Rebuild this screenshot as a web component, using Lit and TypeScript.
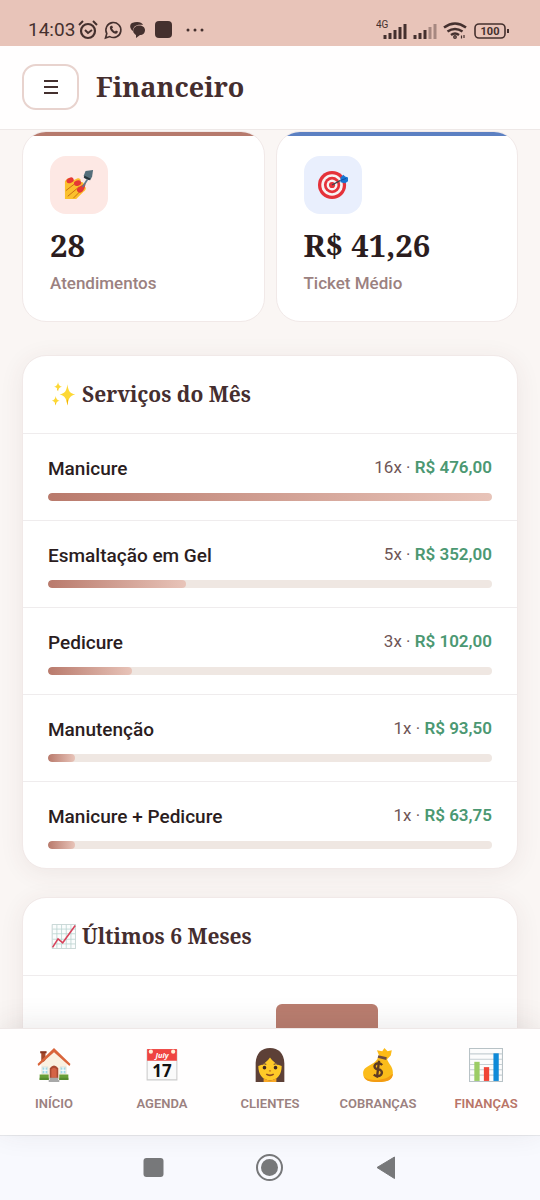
import { LitElement, html, css, svg } from "lit";
import { customElement, state } from "lit/decorators.js";

const emoji = {
  polish: svg`
    <path fill="#fbc02d" d="M1 12c3-5 8-4 9-1l4-2c3-1 5 2 3 4 3-1 5 1 4 4 3 1 3 4 0 6l-8 8H1z"/>
    <path d="M2 22l9-7M4 28l12-10M10 30l9-9" stroke="#c76a12" stroke-width="1"/>
    <ellipse cx="6.500" cy="11" rx="4" ry="2.800" transform="rotate(-22 6.500 11)" fill="#e53935"/>
    <ellipse cx="14.500" cy="14" rx="4" ry="2.900" transform="rotate(-18 14.500 14)" fill="#e53935"/>
    <path fill="#e53935" d="M14 20c2-3 5-3 9-7 0 5-2 10-5 11-3 1-5-2-4-4z"/>
    <path d="M20 18l5-8" stroke="#607d8b" stroke-width="2"/>
    <path d="M23 1l8-1-1 7-2 4-6-2-1-3z" fill="#546e7a"/>
    <path d="M22 6l6 3-1 2-6-3z" fill="#263238"/>`,
  target: svg`
    <circle cx="15" cy="16" r="15" fill="#e5323a"/>
    <circle cx="15" cy="16" r="11.500" fill="#f7f3f3"/>
    <circle cx="15" cy="16" r="8.700" fill="#e5323a"/>
    <circle cx="15" cy="16" r="5.800" fill="#f7f3f3"/>
    <circle cx="15" cy="16" r="3.300" fill="#e5323a"/>
    <path d="M15 16l9-5" stroke="#37474f" stroke-width="1.500"/>
    <path d="M24 8l3-3 2 2 3 1v4l-3 2-5-1z" fill="#1976d2"/>
    <path d="M24 11l6-2" stroke="#0d47a1"/>`,
  sparkles: svg`
    <path fill="#fdd835" d="M21 3c1 8 3 12 10 13-7 1-9 6-10 14-1-8-3-13-10-14 7-1 9-5 10-13zM9 0c.6 4 2 5.500 5 6-3 .5-4.400 2-5 6-.6-4-2-5.500-5-6 3-.5 4.400-2 5-6zM6 18c.6 4 2 5.500 5 6-3 .5-4.400 2-5 6-.6-4-2-5.500-5-6 3-.5 4.400-2 5-6z"/>
    <path fill="#f4b400" d="M21 22l1 2-1 6-1-6zM9 9v3l-1-3zM6 27v3l-1-3z"/>`,
  trend: svg`
    <path fill="#fbfdfd" stroke="#b7c9c8" d="M1.500.5h30v31h-30z"/>
    <path d="M7.500 1v30M13.500 1v30M19.500 1v30M25.500 1v30M2 6.500h29M2 12.500h29M2 19.500h29M2 25.500h29" stroke="#b9d2cf"/>
    <path d="M2 30l7-11 6 5L31 2" fill="none" stroke="#d8435b" stroke-width="2"/>`,
  house: svg`
    <path fill="#a6492b" d="M4 4h4v9H4z"/>
    <path fill="#8b351f" d="M3 3h6v2H3z"/>
    <path fill="#faf1e2" d="M4 15L16 4l12 11v13H4z"/>
    <path fill="#d9653b" d="M16 0l15.500 15-1 2L16 4 1.500 17l-1-2z"/>
    <path fill="#9fd9e8" stroke="#d5e2df" d="M5 18h5v6H5zM22 18h5v6h-5z"/>
    <path d="M7.500 18v6M5 21h5M24.500 18v6M22 21h5" stroke="#fff"/>
    <path fill="#a84a32" d="M12 29V19q4-5 8 0v10z"/>
    <path fill="#d46447" d="M13.500 28v-8q2.500-3 5 0v8z"/>
    <path fill="#689f38" d="M2.500 25H11v5H2.500zM21 25h8.500v5H21z"/>
    <path fill="#558b2f" d="M2.500 28H11v2H2.500zM21 28h8.500v2H21z"/>
    <path fill="#a8a8a8" d="M12 28h8v2h1v2H11v-2h1z"/>`,
  calendar: svg`
    <path fill="#fafafa" stroke="#ccc" d="M2 2h28v28H2z"/>
    <path fill="#ef4440" d="M2 1h28v11H2z"/>
    <circle cx="5.500" cy="3.500" r="2" fill="#fff0d5"/><circle cx="26.500" cy="3.500" r="2" fill="#fff0d5"/>
    <text x="16" y="9.500" class="month">July</text>
    <text x="16" y="27" class="day">17</text>`,
  woman: svg`
    <path fill="#5d4037" d="M2.500 32V14C3 5 8 0 16 0s13 5 13.500 14v18z"/>
    <path fill="#ffca28" d="M5 17q7-2 11-8 4 6 11 8c0 8-4 13.500-11 13.500S5 25 5 17z"/>
    <path fill="#f9a825" d="M10 28.500q6 4 12 0V32H10z"/>
    <circle cx="10.800" cy="18.500" r="1.700" fill="#3e2723"/><circle cx="21.200" cy="18.500" r="1.700" fill="#3e2723"/>
    <path d="M8.500 15.500q2-1.500 4 0M19.500 15.500q2-1.500 4 0" fill="none" stroke="#6d4c41"/>
    <path d="M15 21.500h2" stroke="#d48a1f" stroke-width="1.500"/>
    <path d="M12.500 24.500q3.500 2.500 7 0" fill="none" stroke="#8d4a1f" stroke-width="1.500"/>`,
  money: svg`
    <path fill="#fdbb17" d="M17 7l-2-5 5 1 2-3 3 3 4-1-1 5-4 4z"/>
    <path fill="#fbbc1b" d="M16 9h8c2 7 6 8 6 14 0 7-5 9-14 9-9 0-14-2-14-8C2 16 13 17 16 9z"/>
    <path fill="#f39b13" d="M3 27c5 5 21 4 27-3 0 6-5 8-14 8-7 0-12-1-13-5z"/>
    <path d="M16 8l8 2" stroke="#6d4c41" stroke-width="2.500"/>
    <path d="M20 16q-3-3-6-1c-3 3 0 5 2 5s5 2 3 5q-3 3-7 0M17 12l-2 16" fill="none" stroke="#5d3b24" stroke-width="2.200"/>`,
  chart: svg`
    <path fill="#fcfcfc" stroke="#b8c2c6" d="M.5.5h31v31H.5z"/>
    <path d="M1 5.500h30M1 10.500h30M1 15.500h30M1 20.500h30M1 25.500h30" stroke="#c5ced2"/>
    <path fill="#9ccc65" d="M5 13h5v18H5z"/>
    <path fill="#f04436" d="M14 18h5v13h-5z"/>
    <path fill="#0f8ad8" d="M23 5h5v26h-5z"/>`,
};

interface Service {
  name: string;
  count: number;
  total: string;
  share: number;
}

@customElement("app-status-bar")
class StatusBar extends LitElement {
  static styles = css`
    :host {
      display: flex;
      justify-content: space-between;
      align-items: flex-end;
      height: 46px;
      padding: 0 30px 5px 28px;
      box-sizing: border-box;
      background: #e8c4b9;
      color: #44302e;
      font-size: 19px;
      line-height: 22px;
      flex: none;
    }
    .left { display: flex; align-items: center; gap: 3px; }
    svg { display: block; }
    .tray { fill: none; stroke: currentColor; }
    .net { font-family: Roboto, sans-serif; font-size: 10px; fill: currentColor; }
    .level { font: 700 11px Roboto, sans-serif; fill: currentColor; text-anchor: middle; }
  `;

  render() {
    return html`
      <div class="left">
        <span>14:03</span>
        <svg class="tray" width="130" height="22" viewBox="0 0 130 22">
          <circle cx="10" cy="12" r="7" stroke-width="2.200"/>
          <path d="M1 6l4-4M19 6l-4-4M7 11l3 3 4-3" stroke-width="2"/>
          <path d="M27.500 19l1.300-4.400a7.500 7.500 0 1 1 3 3z" stroke-width="1.600"/>
          <path d="M32 7.500c-1 3 3 8 7 7l1-2-2-1-1 1c-2-1-2-2-3-3l1-1-1-2z" fill="currentColor" stroke="none"/>
          <g fill="currentColor" stroke="none">
            <path d="M54 4c5-2 10-1 11 2-6-1-10 1-10 6-3-2-4-6-1-8z"/>
            <path d="M57 8c4-3 10-1 10 3 0 3-2 5-5 5l-4 3v-3c-3-2-4-5-1-8z"/>
            <rect x="77" y="2" width="17" height="17" rx="4"/>
            <circle cx="110" cy="11" r="1.500"/><circle cx="117" cy="11" r="1.500"/><circle cx="124" cy="11" r="1.500"/>
          </g>
        </svg>
      </div>
      <svg width="134" height="22" viewBox="0 0 134 22">
        <text class="net" x="0" y="9">4G</text>
        <g stroke="currentColor" stroke-width="3">
          <path d="M9 16v4M14 14v6M19 11v9M24 8v12M29 5v15M39 16v4M44 14v6M49 11v9"/>
          <path d="M54 8v12M59 5v15" opacity=".4"/>
        </g>
        <g fill="none" stroke="currentColor" stroke-width="2.500">
          <path d="M68 8.500q11-8 22 0M71.500 12.500q7.500-5 15 0M75 16q4-3 8 0"/>
          <circle cx="79" cy="18" r=".7"/>
          <path d="M85.500 19.500v-3M88 16v3" stroke-width="1.200"/>
        </g>
        <rect x="99" y="5" width="30" height="14" rx="4" fill="none" stroke="currentColor" stroke-width="1.600"/>
        <path d="M132 10v4" stroke="currentColor" stroke-width="2"/>
        <text class="level" x="114" y="16">100</text>
      </svg>
    `;
  }
}

@customElement("app-service-row")
class ServiceRow extends LitElement {
  static properties = { service: { attribute: false } };
  declare service: Service;

  static styles = css`
    :host {
      display: block;
      padding: 21px 25px 19px;
      border-top: 1px solid #efeced;
    }
    .line { display: flex; justify-content: space-between; gap: 12px; }
    .name { font-size: 19px; font-weight: 500; line-height: 28px; color: #2b1d1e; }
    .amount { font-size: 17px; line-height: 24px; color: #6f5656; }
    .total { font-weight: 600; color: #4b9872; }
    .track { height: 8px; margin-top: 10px; border-radius: 4px; background: #efe7e2; overflow: hidden; }
    .fill { height: 100%; border-radius: 4px; background: linear-gradient(90deg, #b97a6c, #e8c4b9); }
  `;

  render() {
    const { name, count, total, share } = this.service;
    return html`
      <div class="line">
        <span class="name">${name}</span>
        <span class="amount">${count}x · <span class="total">R$ ${total}</span></span>
      </div>
      <div class="track"><div class="fill" style="width:${share}%"></div></div>
    `;
  }
}

@customElement("app-root")
class AppRoot extends LitElement {
  @state() private services: Service[] = [
    { name: "Manicure", count: 16, total: "476,00", share: 100 },
    { name: "Esmaltação em Gel", count: 5, total: "352,00", share: 31 },
    { name: "Pedicure", count: 3, total: "102,00", share: 19 },
    { name: "Manutenção", count: 1, total: "93,50", share: 6 },
    { name: "Manicure + Pedicure", count: 1, total: "63,75", share: 6 },
  ];

  private months = [20, 40, 100, 30];

  private tabs = [
    { label: "INÍCIO", icon: emoji.house },
    { label: "AGENDA", icon: emoji.calendar },
    { label: "CLIENTES", icon: emoji.woman },
    { label: "COBRANÇAS", icon: emoji.money },
    { label: "FINANÇAS", icon: emoji.chart, active: true },
  ];

  static styles = css`
    :host {
      display: flex;
      flex-direction: column;
      height: 100vh;
      overflow: hidden;
      background: #faf6f4;
      font-family: Roboto, sans-serif;
      color: #2b1d1e;
    }
    h1, h2, p { margin: 0; }
    h1, h2, .value { font-family: "Noto Serif", "DejaVu Serif Condensed", "DejaVu Serif", serif; font-weight: 700; }
    svg { display: block; flex: none; }
    .header {
      display: flex;
      align-items: center;
      gap: 17px;
      flex: none;
      padding: 18px 22px 19px;
      background: #fffefe;
      border-bottom: 1px solid #eee8e7;
    }
    .menu {
      display: grid;
      place-items: center;
      width: 57px;
      height: 46px;
      padding: 0;
      border: 2px solid #e8d3ce;
      border-radius: 14px;
      background: #fff;
      color: #44302e;
    }
    h1 { font-size: 27px; line-height: 36px; color: #452e2f; }
    .content { flex: 1; min-height: 0; overflow: hidden; padding: 1px 22px 0; }
    .stats { display: grid; grid-template-columns: 1fr 1fr; gap: 11px; margin-bottom: 33px; }
    .stat, .panel {
      border: 1px solid #f1e9e8;
      border-radius: 24px;
      background: #fff;
      overflow: hidden;
    }
    .stat { padding-bottom: 26px; }
    .stat::before { content: ""; display: block; height: 4px; background: #b67a6d; }
    .stat.blue::before { background: #5c80c2; }
    .stat > * { margin-left: 27px; }
    .badge {
      display: grid;
      place-items: center;
      width: 58px;
      height: 58px;
      margin-top: 20px;
      border-radius: 16px;
      background: #fde8e4;
    }
    .blue .badge { background: #e9effd; }
    .value { margin-top: 10px; font-size: 31px; line-height: 42px; }
    .caption { margin-top: 5px; font-size: 17px; font-weight: 500; line-height: 24px; color: #9b8180; }
    .panel { margin-bottom: 28px; box-shadow: 0 4px 24px rgba(90, 50, 50, 0.08); }
    .panel-head { display: flex; align-items: center; gap: 6px; padding: 22px 28px; }
    h2 { font-size: 21px; line-height: 33px; color: #452e2f; }
    .chart {
      display: grid;
      grid-template-columns: repeat(4, 1fr);
      align-items: end;
      gap: 11px;
      height: 180px;
      padding: 28px 25px;
      border-top: 1px solid #efeced;
    }
    .bar { border-radius: 6px 6px 0 0; background: #b97d6f; }
    .tabs {
      display: grid;
      grid-template-columns: repeat(5, 1fr);
      flex: none;
      position: relative;
      padding: 19px 0 22px;
      background: #fffefe;
      border-top: 1px solid #eee8e7;
      box-shadow: 0 -4px 28px rgba(60, 45, 45, 0.1);
    }
    .tab {
      display: flex;
      flex-direction: column;
      align-items: center;
      gap: 13px;
      color: #9b8180;
      font-size: 13px;
      font-weight: 600;
      line-height: 18px;
      text-decoration: none;
    }
    .active { color: #b97568; }
    .month { font: italic 700 7px "Noto Sans", sans-serif; fill: #fff; text-anchor: middle; }
    .day { font: 700 16px "Noto Sans", sans-serif; fill: #111; text-anchor: middle; }
    .system {
      display: flex;
      justify-content: center;
      gap: 76px;
      flex: none;
      padding: 12px 0;
      background: #f8f9fe;
      border-top: 1px solid #e8e9ed;
    }
    .key { padding: 0; border: 0; background: none; color: #77787a; }
  `;

  render() {
    return html`
      <app-status-bar></app-status-bar>
      <header class="header">
        <button class="menu" aria-label="Menu">
          <svg width="14" height="14" viewBox="0 0 14 14" stroke="currentColor" stroke-width="2"><path d="M0 1h14M0 7h14M0 13h14"/></svg>
        </button>
        <h1>Financeiro</h1>
      </header>
      <main class="content">
        <div class="stats">
          <article class="stat">
            <div class="badge"><svg width="30" height="30" viewBox="0 0 32 32">${emoji.polish}</svg></div>
            <p class="value">28</p>
            <p class="caption">Atendimentos</p>
          </article>
          <article class="stat blue">
            <div class="badge"><svg width="30" height="30" viewBox="0 0 32 32">${emoji.target}</svg></div>
            <p class="value">R$ 41,26</p>
            <p class="caption">Ticket Médio</p>
          </article>
        </div>
        <section class="panel">
          <div class="panel-head">
            <svg width="25" height="25" viewBox="0 0 32 32">${emoji.sparkles}</svg>
            <h2>Serviços do Mês</h2>
          </div>
          ${this.services.map((s) => html`<app-service-row .service=${s}></app-service-row>`)}
        </section>
        <section class="panel">
          <div class="panel-head">
            <svg width="25" height="25" viewBox="0 0 32 32">${emoji.trend}</svg>
            <h2>Últimos 6 Meses</h2>
          </div>
          <div class="chart">
            ${this.months.map((m) => html`<div class="bar" style="height:${m}%"></div>`)}
          </div>
        </section>
      </main>
      <nav class="tabs">
        ${this.tabs.map((t) => html`
          <a class="tab ${t.active ? "active" : ""}" href="#">
            <svg width="34" height="34" viewBox="0 0 32 32">${t.icon}</svg>
            ${t.label}
          </a>`)}
      </nav>
      <div class="system">
        <button class="key" aria-label="Recentes"><svg width="40" height="40" viewBox="0 0 40 40"><rect x="9.500" y="10" width="20" height="19" rx="3" fill="currentColor"/></svg></button>
        <button class="key" aria-label="Tela inicial"><svg width="40" height="40" viewBox="0 0 40 40"><circle cx="19.500" cy="19.500" r="12.500" fill="none" stroke="currentColor" stroke-width="2"/><circle cx="19.500" cy="19.500" r="8.500" fill="currentColor"/></svg></button>
        <button class="key" aria-label="Voltar"><svg width="40" height="40" viewBox="0 0 40 40"><path d="M11 19.500L28.500 9v21.500z" fill="currentColor" stroke="currentColor" stroke-linejoin="round"/></svg></button>
      </div>
    `;
  }
}
